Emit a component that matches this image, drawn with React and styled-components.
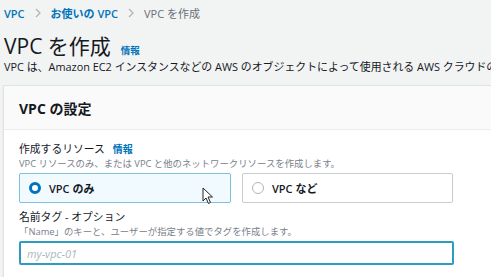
import React from "react";
import styled, { createGlobalStyle } from "styled-components";

const Global = createGlobalStyle`
  html, body {
    margin: 0;
    padding: 0;
    background: #f2f3f3;
    overflow: hidden;
  }
  body {
    font-family: "Open Sans", "Noto Sans CJK JP", sans-serif;
    color: #16191f;
  }
`;

const Page = styled.div`
  position: relative;
  width: 560px;
  padding: 4px 0 0 4px;
`;

const Crumbs = styled.nav`
  display: flex;
  align-items: center;
  gap: 9px;
  height: 18px;
  font-size: 11px;
`;

const Crumb = styled.span`
  color: ${({ $current }) => ($current ? "#687078" : "#0073bb")};
  font-weight: ${({ $current }) => ($current ? 400 : 600)};
  white-space: nowrap;
`;

const Chevron = styled.svg`
  width: 8px;
  height: 10px;
  stroke: #aab7b8;
  stroke-width: 1.3;
  fill: none;
`;

const TitleRow = styled.div`
  display: flex;
  align-items: baseline;
  gap: 10px;
  margin-top: 10px;
`;

const Title = styled.h1`
  margin: 0;
  font-size: 21px;
  font-weight: 400;
  line-height: 28px;
  white-space: nowrap;
`;

const Info = styled.a`
  color: #0073bb;
  font-size: ${({ $size }) => $size || 9.5}px;
  font-weight: 700;
`;

const Lead = styled.p`
  margin: 0;
  font-size: 10.9px;
  line-height: 14px;
  white-space: nowrap;
`;

const Card = styled.section`
  margin: 11px 0 0 -1px;
  background: #fff;
  border: 1px solid #e0e3e3;
  border-right: none;
  box-shadow: 0 1px 1px rgba(0, 28, 36, 0.15);
`;

const CardHeader = styled.header`
  height: 43px;
  display: flex;
  align-items: center;
  padding: 0 15px;
  background: #fafafa;
  border-bottom: 1px solid #eaeded;
  font-size: 14px;
  font-weight: 700;
`;

const CardBody = styled.div`
  padding: 11px 15px 14px;
  display: flex;
  flex-direction: column;
`;

const Label = styled.div`
  display: flex;
  align-items: baseline;
  gap: 8px;
  font-size: 10.8px;
  line-height: 16px;
  margin-top: ${({ $gap }) => $gap || 0}px;
`;

const Hint = styled.div`
  font-size: 9.4px;
  line-height: 13px;
  color: #79818a;
  white-space: nowrap;
`;

const Tiles = styled.div`
  display: grid;
  grid-template-columns: 212px 211px;
  gap: 11px;
  margin-top: 3px;
`;

const Tile = styled.label`
  height: 30px;
  box-sizing: border-box;
  display: flex;
  align-items: center;
  gap: 8px;
  padding: 0 9px;
  font-size: 11px;
  font-weight: 600;
  border: 1px solid ${({ $on }) => ($on ? "#7fc0d8" : "#c8cccc")};
  background: ${({ $on }) => ($on ? "#f1faff" : "#fff")};
  border-radius: 2px;
`;

const Radio = styled.span`
  width: 12px;
  height: 12px;
  box-sizing: border-box;
  border-radius: 50%;
  border: ${({ $on }) => ($on ? "3.5px solid #0073bb" : "1px solid #aab7b8")};
  background: #fff;
`;

const Input = styled.input`
  margin-top: 3px;
  width: 435px;
  height: 24px;
  box-sizing: border-box;
  border: 2px solid #2e9cc0;
  border-radius: 2px;
  padding: 0 6px;
  font-family: "Open Sans", sans-serif;
  font-size: 11px;
  font-style: italic;
  outline: none;
  &::placeholder {
    color: #aab7b8;
  }
`;

const Cursor = styled.svg`
  position: absolute;
  left: 202px;
  top: 187px;
  width: 12px;
  height: 18px;
`;

export default function App() {
  return (
    <>
      <Global />
      <Page>
        <Crumbs>
          <Crumb>VPC</Crumb>
          <Chevron viewBox="0 0 8 10"><path d="M2 1l4 4-4 4" /></Chevron>
          <Crumb>お使いの VPC</Crumb>
          <Chevron viewBox="0 0 8 10"><path d="M2 1l4 4-4 4" /></Chevron>
          <Crumb $current>VPC を作成</Crumb>
        </Crumbs>
        <TitleRow>
          <Title>VPC を作成</Title>
          <Info>情報</Info>
        </TitleRow>
        <Lead>
          VPC は、Amazon EC2 インスタンスなどの AWS のオブジェクトによって使用される AWS クラウドの分離された部分です。
        </Lead>
        <Card>
          <CardHeader>VPC の設定</CardHeader>
          <CardBody>
            <Label>
              作成するリソース <Info $size={10}>情報</Info>
            </Label>
            <Hint>VPC リソースのみ、または VPC と他のネットワークリソースを作成します。</Hint>
            <Tiles>
              <Tile $on>
                <Radio $on />
                VPC のみ
              </Tile>
              <Tile>
                <Radio />
                VPC など
              </Tile>
            </Tiles>
            <Label $gap={6}>名前タグ - オプション</Label>
            <Hint>「Name」のキーと、ユーザーが指定する値でタグを作成します。</Hint>
            <Input placeholder="my-vpc-01" />
          </CardBody>
        </Card>
        <Cursor viewBox="0 0 12 18">
          <path d="M1 1v13l3-3 2.5 5.5 2-1L6 10h4.5z" fill="#fff" stroke="#222" strokeWidth="1" strokeLinejoin="round" />
        </Cursor>
      </Page>
    </>
  );
}
